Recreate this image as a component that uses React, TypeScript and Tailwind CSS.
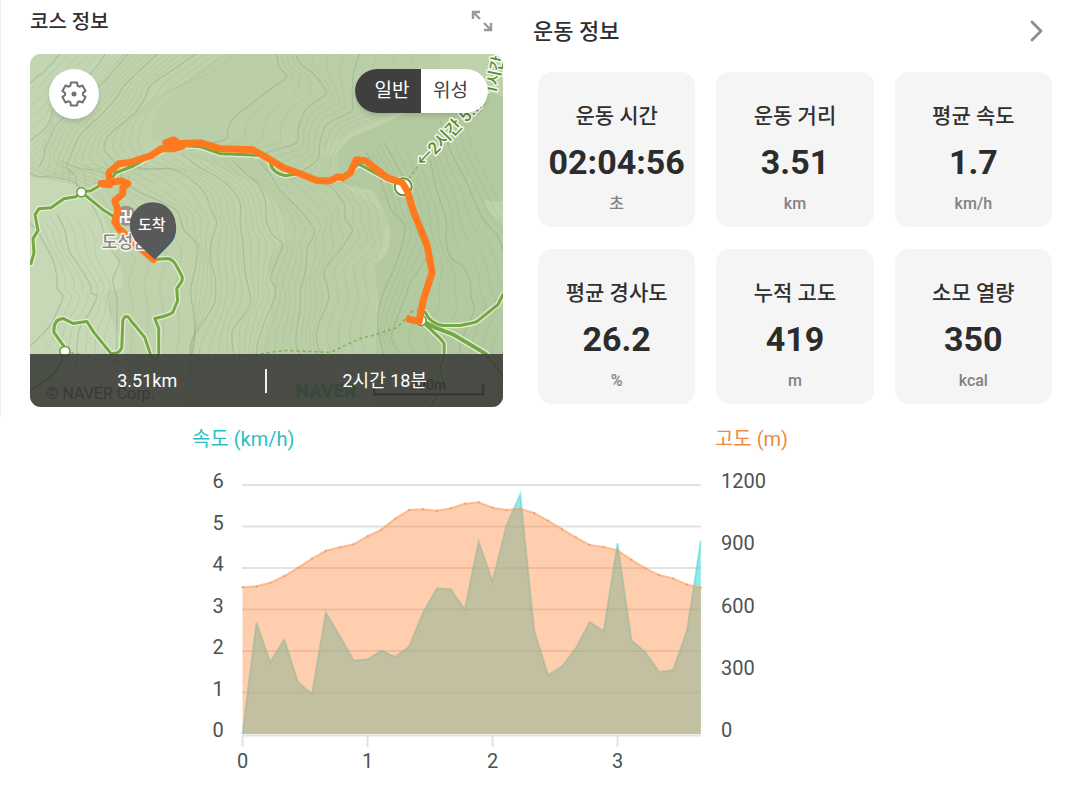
import React, { useState } from 'react';

type Point = [number, number];

interface Stat {
  label: string;
  value: string;
  unit: string;
}

const STATS: Stat[] = [
  { label: '운동 시간', value: '02:04:56', unit: '초' },
  { label: '운동 거리', value: '3.51', unit: 'km' },
  { label: '평균 속도', value: '1.7', unit: 'km/h' },
  { label: '평균 경사도', value: '26.2', unit: '%' },
  { label: '누적 고도', value: '419', unit: 'm' },
  { label: '소모 열량', value: '350', unit: 'kcal' },
];

// one sample every 1/9 km
const SPEED = [
  0, 2.69, 1.73, 2.28, 1.25, 0.96, 2.93, 2.37, 1.77, 1.8, 2.01, 1.86, 2.11, 2.93, 3.51, 3.49, 3.0,
  4.64, 3.68, 5.02, 5.78, 2.49, 1.42, 1.63, 2.07, 2.7, 2.48, 4.6, 2.26, 1.97, 1.5, 1.54, 2.49, 4.66,
];
const ALTITUDE = [
  707, 712, 729, 761, 801, 845, 883, 900, 914, 953, 985, 1038, 1080, 1083, 1076, 1088, 1110,
  1117, 1091, 1080, 1086, 1065, 1028, 987, 948, 911, 901, 885, 840, 799, 766, 750, 720, 705,
];

// Each family is a set of guide lines; contours are interpolated between neighbours.
const CONTOURS: { steps: number; lines: Point[][] }[] = [
  {
    steps: 5,
    lines: [
      [[29, 82], [36, 76], [44, 70], [52, 62], [56, 56], [60, 50]],
      [[29, 140], [44, 128], [52, 108], [72, 88], [92, 70], [106, 50]],
      [[38, 166], [44, 148], [54, 126], [78, 102], [104, 80], [130, 50]],
      [[76, 186], [66, 166], [78, 136], [102, 112], [124, 84], [160, 50]],
      [[124, 184], [104, 150], [108, 134], [134, 112], [150, 84], [200, 50]],
      [[150, 168], [146, 140], [156, 106], [180, 84], [224, 70], [250, 50]],
    ],
  },
  {
    steps: 4,
    lines: [
      [[190, 150], [226, 138], [234, 116], [262, 94], [286, 76], [276, 50]],
      [[250, 158], [296, 142], [306, 108], [326, 92], [312, 72], [294, 50]],
      [[290, 180], [318, 158], [326, 124], [352, 110], [352, 90], [360, 50]],
      [[340, 184], [336, 156], [356, 130], [400, 112], [428, 84], [432, 50]],
    ],
  },
  {
    steps: 5,
    lines: [
      [[29, 172], [50, 176], [74, 182], [100, 222], [118, 260], [112, 280], [116, 320], [122, 407]],
      [[60, 160], [96, 170], [140, 192], [176, 210], [196, 244], [190, 290], [194, 340], [186, 407]],
      [[134, 166], [170, 168], [204, 192], [216, 222], [210, 260], [214, 302], [190, 344], [198, 407]],
      [[180, 152], [216, 176], [240, 204], [242, 240], [250, 300], [232, 330], [236, 366], [230, 407]],
      [[232, 160], [258, 184], [266, 220], [282, 244], [270, 278], [274, 298], [256, 350], [262, 407]],
      [[258, 160], [280, 190], [314, 230], [306, 260], [300, 290], [296, 330], [302, 360], [298, 407]],
      [[280, 172], [330, 186], [344, 204], [352, 230], [324, 270], [328, 300], [316, 340], [330, 407]],
      [[350, 176], [372, 190], [386, 214], [390, 250], [374, 264], [378, 300], [372, 340], [390, 407]],
    ],
  },
  {
    steps: 4,
    lines: [
      [[29, 222], [44, 244], [56, 276], [62, 296], [50, 324], [29, 346]],
      [[56, 214], [68, 250], [90, 286], [96, 296], [78, 330], [70, 407]],
      [[96, 224], [104, 256], [116, 284], [114, 306], [112, 340], [120, 407]],
    ],
  },
  {
    steps: 4,
    lines: [
      [[366, 152], [384, 190], [404, 224], [400, 250], [384, 290], [378, 330], [392, 407]],
      [[384, 142], [410, 190], [428, 250], [410, 282], [404, 300], [392, 340], [428, 407]],
      [[430, 160], [446, 220], [450, 256], [470, 280], [474, 310], [460, 350], [490, 407]],
      [[440, 120], [466, 180], [484, 220], [503, 250], [520, 300], [503, 350], [510, 407]],
      [[474, 120], [490, 170], [512, 210], [530, 240], [540, 300], [540, 350], [540, 407]],
    ],
  },
];

const wobble = (i: number, j: number) => Math.sin(i * 2.1 + j * 3.7) * 3;

const smooth = (pts: Point[]) => {
  let d = `M${pts[0][0]} ${pts[0][1]}`;
  for (let i = 0; i < pts.length - 1; i++) {
    const p0 = pts[i - 1] ?? pts[i];
    const p1 = pts[i];
    const p2 = pts[i + 1];
    const p3 = pts[i + 2] ?? p2;
    const c1 = [p1[0] + (p2[0] - p0[0]) / 7, p1[1] + (p2[1] - p0[1]) / 7];
    const c2 = [p2[0] - (p3[0] - p1[0]) / 7, p2[1] - (p3[1] - p1[1]) / 7];
    d += `C${[...c1, ...c2, ...p2].map((n) => n.toFixed(1)).join(' ')}`;
  }
  return d;
};

// adds jittered midpoints so the lines look surveyed instead of drawn with a spline
const roughen = (pts: Point[], seed: number): Point[] =>
  pts.flatMap((p, i) => {
    const next = pts[i + 1];
    if (!next) return [p];
    const w = wobble(i, seed * 0.12);
    return [p, [(p[0] + next[0]) / 2 + w, (p[1] + next[1]) / 2 - w * 0.6]] as Point[];
  });

const contourPaths = CONTOURS.flatMap(({ steps, lines }, f) =>
  lines.slice(0, -1).flatMap((line, k) =>
    Array.from({ length: steps }, (_, s) => {
      const t = s / steps;
      const pts = line.map(([x, y], i): Point => {
        const [nx, ny] = lines[k + 1][i];
        return [x + (nx - x) * t, y + (ny - y) * t];
      });
      return { d: smooth(roughen(pts, f * 5 + k + t)), major: s === 0 };
    }),
  ),
);

const ROADS = [
  'M30 263L33 252L32 238L37 230L34 214L38 208L50 207L63 198L75 196L80 191L90 190L97 186L104 182',
  'M80 191L102 209L110 214L122 222',
  'M154 259L167 258Q172 259 175 264L181 275Q183 280 179 284L176 288L177 300L172 312Q168 315 154 318L158 328V353Q157 360 154 360Q151 360 149 352L144 337L135 326Q131 322 128 317Q124 314 122 320L121 347Q119 354 110 353L93 332L86 321L72 323L62 318Q52 319 53 332L63 346V351L60 362L52 375L30 390',
  'M108 182L115 172L133 165L147 157L162 150L172 143L183 145L200 146L220 153L247 154L263 155L270 162Q271 172 285 175L297 173L317 181L345 177L358 163L387 179L402 184',
  'M421 310L425 312Q431 324 443 325H460Q473 323 477 321L498 304L503 294',
  'M421 320L440 338L444 343V355L440 370L444 383L430 407',
];
const MAIN_ROAD = 'M421 320L437 328L453 334L485 353L503 375';

const ROUTE =
  'M153 259L133 242L118 228L114 221L117 210L114 200L122 193V187L127 183L120 180L100 183L109 184L108 172L118 163L128 162L150 155L160 148L172 148L182 145L173 139L165 142L172 145L177 143L200 142L220 148L252 149L263 155L283 167L297 172L317 180L330 180L337 176L343 177L350 172L356 159L365 160L387 177L402 182L407 190L413 210L427 245L432 272L423 300L419 321L409 319';

const TrailMap = () => (
  <svg
    viewBox="29 53 474 354"
    preserveAspectRatio="xMidYMid slice"
    className="absolute inset-0 h-full w-full"
    aria-hidden="true"
  >
    <rect x="29" y="53" width="474" height="354" fill="#bfd2ac" />
    <path d="M29 53H122Q100 80 78 102T54 126T38 166L29 150Z" fill="#c3d6b3" />
    <path d="M29 176L76 184Q96 200 102 214T118 260T112 290T116 330T122 407H29Z" fill="#c6d8b5" />
    <path d="M224 53H440Q440 84 428 94T356 130T336 156L340 184L300 176L250 153L180 142L150 140Q148 110 180 84T224 53Z" fill="#bacfa8" />
    <path d="M180 150L262 160L300 178L340 184L390 214L376 264V407H262Q250 360 264 330T270 278T282 244T258 184Z" fill="#bacfa8" />
    <path d="M336 156Q340 140 366 130T428 100T503 96V407H372L378 300L374 264Q390 256 390 236T372 190L340 182Z" fill="#b3c99f" />
    <path d="M484 200Q490 215 503 224V200Z" fill="#bcd2aa" />

    <g fill="none" stroke="#93ac80">
      {contourPaths.map(({ d, major }, i) => (
        <path key={i} d={d} strokeWidth={major ? 1.2 : 0.9} opacity={major ? 0.5 : 0.26} />
      ))}
    </g>

    <g fill="none" strokeLinecap="round" strokeLinejoin="round">
      <path d={ROADS.join('')} stroke="#e3edd8" strokeWidth="5.5" />
      <path d={MAIN_ROAD} stroke="#e3edd8" strokeWidth="6.5" />
      <path d={ROADS.join('')} stroke="#74a840" strokeWidth="3" />
      <path d={MAIN_ROAD} stroke="#74a840" strokeWidth="4" />
    </g>
    <path
      d="M64 351L110 361L154 363L233 358L258 354L283 350L330 352L360 338L373 335L397 327L412 311L422 309M405 183L420 162M474 114L490 88M494 72L500 53"
      fill="none"
      stroke="#7fae55"
      strokeWidth="1.5"
      strokeDasharray="3 3"
    />
    <circle cx="80.5" cy="191.5" r="4.5" fill="#fff" stroke="#6d9c3c" strokeWidth="1.5" />
    <circle cx="64" cy="351" r="5" fill="#fff" stroke="#6d9c3c" strokeWidth="1.5" />
    <circle cx="421" cy="320" r="5" fill="#fff" stroke="#6d9c3c" strokeWidth="1.5" />
    <circle cx="403" cy="186" r="10.5" fill="#e3edd8" />
    <circle cx="403" cy="186" r="8.5" fill="#fff" stroke="#5f9a36" strokeWidth="2" />

    <g
      fill="#568f31"
      stroke="#f4f8ee"
      strokeWidth="3"
      strokeLinejoin="round"
      paintOrder="stroke"
      fontWeight="500"
    >
      <text transform="translate(423 167) rotate(-46)" fontSize="17">←2시간 5...</text>
      <text transform="translate(496 94) rotate(-78)" fontSize="16">1시간</text>
    </g>

    <circle cx="125" cy="215" r="10" fill="#9b9188" />
    <text x="125" y="221" fontSize="15" fontWeight="700" textAnchor="middle" fill="#fff">卍</text>
    <path d={ROUTE} fill="none" stroke="#ff7a1f" strokeWidth="7" strokeLinejoin="round" strokeLinecap="round" />
    <text
      x="101"
      y="247"
      fontSize="17"
      fontWeight="500"
      fill="#8f857d"
      stroke="#f4f6ee"
      strokeWidth="3"
      strokeLinejoin="round"
      paintOrder="stroke"
    >
      도성암
    </text>
    <path d="M149 255L153 258" stroke="#ff7a1f" strokeWidth="6" strokeLinecap="round" />

    <path d="M154 259L138 244A22 22 0 1 1 169 244Z" fill="#445c77" />
    <path d="M153 257L135 240A23 23 0 1 1 169 240Z" fill="#595959" />
    <text x="151" y="229" fontSize="15" fontWeight="500" textAnchor="middle" fill="#fff">도착</text>

    <text x="45" y="399" fontSize="16" fill="#111">© NAVER Corp.</text>
    <text x="295" y="397" fontSize="19" fontWeight="900" fill="#00b050">NAVER</text>
    <text x="428" y="390" fontSize="14" fontWeight="500" textAnchor="middle" fill="#000">300m</text>
    <path d="M374 384V394H483V384" fill="none" stroke="#000" strokeWidth="2.5" />
  </svg>
);

const gearPoints = Array.from({ length: 6 }, (_, k) =>
  [[-24, 9], [-15, 12], [15, 12], [24, 9]].map(([a, r]) => {
    const rad = ((k * 60 - 90 + a) * Math.PI) / 180;
    return `${(13 + r * Math.cos(rad)).toFixed(2)},${(13 + r * Math.sin(rad)).toFixed(2)}`;
  }).join(' '),
).join(' ');

const GearIcon = () => (
  <svg viewBox="0 0 26 26" className="size-[26px]" aria-hidden="true">
    <polygon points={gearPoints} fill="none" stroke="#707070" strokeWidth="2" strokeLinejoin="round" />
    <circle cx="13" cy="13" r="2.5" fill="#707070" />
  </svg>
);

const CourseCard = () => {
  const [mapType, setMapType] = useState<'normal' | 'satellite'>('normal');

  return (
    <section className="border-l border-[#ececec] pb-[10px] pl-[29px] pr-[30px]">
      <div className="flex h-[54px] items-start justify-between pr-[10px] pt-[7px]">
        <h2 className="text-[20px] leading-[30px] font-medium text-[#303030]">코스 정보</h2>
        <button type="button" aria-label="크게 보기" className="pt-[3px]">
          <svg viewBox="0 0 22 22" className="size-[22px]" fill="none" stroke="#999" strokeWidth="2.4" aria-hidden="true">
            <path d="M2 9V2H9M2 2L9 9M20 13V20H13M20 20L13 13" />
          </svg>
        </button>
      </div>

      <div className="relative flex aspect-[474/354] flex-col justify-between overflow-hidden rounded-[11px]">
        <TrailMap />
        <div className="relative flex items-start justify-between px-[15px] pt-[15px]">
          <button
            type="button"
            aria-label="지도 설정"
            className="ml-1 flex size-[50px] items-center justify-center rounded-full bg-white shadow-md"
          >
            <GearIcon />
          </button>
          <div className="flex h-11 overflow-hidden rounded-full bg-white text-[19px] shadow-md">
            <button
              type="button"
              onClick={() => setMapType('normal')}
              className={`w-[66px] pl-2 ${mapType === 'normal' ? 'bg-[#3f3f3f] text-white' : 'text-[#3f3f3f]'}`}
            >
              일반
            </button>
            <button
              type="button"
              onClick={() => setMapType('satellite')}
              className={`w-[67px] pr-2 ${mapType === 'satellite' ? 'bg-[#3f3f3f] text-white' : 'text-[#3f3f3f]'}`}
            >
              위성
            </button>
          </div>
        </div>
        <div className="relative grid h-[53px] grid-cols-2 items-center divide-x-2 divide-white/90 bg-[#3d3e3b]/90 text-center text-[18px] leading-6 text-white">
          <span>3.51km</span>
          <span>2시간 18분</span>
        </div>
      </div>
    </section>
  );
};

const StatCard = ({ label, value, unit }: Stat) => (
  <div className="flex flex-col items-center gap-[6px] rounded-[14px] bg-[#f5f5f5] pb-[11px] pt-7">
    <dt className="text-[21px] leading-8 font-medium text-[#303030]">{label}</dt>
    <dd className="text-[34px] leading-[48px] font-bold text-[#2c2c2c]">{value}</dd>
    <dd className="text-[16px] leading-6 font-medium text-[#828282]">{unit}</dd>
  </div>
);

const WorkoutSection = () => (
  <section className="pr-[23px]">
    <div className="flex h-[72px] items-start justify-between pr-[9px] pt-4">
      <h2 className="text-[22px] leading-8 font-medium text-[#303030]">운동 정보</h2>
      <button type="button" aria-label="더 보기" className="pt-1">
        <svg viewBox="0 0 14 22" className="h-[22px] w-[14px]" fill="none" stroke="#8c8c8c" strokeWidth="2.8" aria-hidden="true">
          <path d="M3 2L12 11L3 20" strokeLinecap="round" strokeLinejoin="round" />
        </svg>
      </button>
    </div>
    <dl className="grid grid-cols-3 gap-x-[21px] gap-y-[22px] pl-[5px]">
      {STATS.map((stat) => (
        <StatCard key={stat.label} {...stat} />
      ))}
    </dl>
  </section>
);

const LEFT = 50;
const BASE = 275;
const STEP = 125 / 9;
const UNIT = 41.5;

const chartPoints = (values: number[], perUnit: number) =>
  values.map((v, i): Point => [LEFT + 0.5 + i * STEP, BASE - (v / perUnit) * UNIT]);

const speedPts = chartPoints(SPEED, 1);
const altitudePts = chartPoints(ALTITUDE, 200);
const RIGHT = speedPts[speedPts.length - 1][0];

const toArea = (pts: Point[]) => `M${pts.join('L')}V${BASE}H${pts[0][0]}Z`;

const ProfileChart = () => (
  <section className="grid grid-cols-[192fr_596fr_287fr] pt-[7px]">
    <figure className="col-start-2">
      <figcaption className="flex justify-between text-[20px] leading-[30px]">
        <span className="text-[#2bbfc3]">속도 (km/h)</span>
        <span className="text-[#f08a3c]">고도 (m)</span>
      </figcaption>
      <svg viewBox="0 -5 596 330" className="w-full" role="img" aria-label="속도와 고도 그래프">
        <g stroke="#e2e2e2" strokeWidth="2">
          {[0, 1, 2, 3, 4, 5, 6].map((n) => (
            <path key={n} d={`M${LEFT} ${BASE - n * UNIT + (n === 0 ? 1.5 : 0)}H${RIGHT}`} />
          ))}
          {[0, 1, 2, 3].map((n) => (
            <path key={n} d={`M${LEFT + 0.5 + n * 125} ${BASE + 2}V${BASE + 13}`} />
          ))}
        </g>
        <path d={toArea(speedPts)} fill="#2ecfd0" fillOpacity="0.5" />
        <path d={`M${speedPts.join('L')}`} fill="none" stroke="#2ecfd0" strokeOpacity="0.4" strokeWidth="2" />
        <path d={toArea(altitudePts)} fill="#ff8a3d" fillOpacity="0.42" />
        <path d={`M${altitudePts.join('L')}`} fill="none" stroke="#f79a5c" strokeOpacity="0.55" strokeWidth="2" />
        {altitudePts.map(([x, y]) => (
          <circle key={x} cx={x} cy={y} r="1" fill="#f3995f" />
        ))}
        <g fill="#4b5254" fontSize="20">
          {[0, 1, 2, 3, 4, 5, 6].map((n) => (
            <text key={n} x="26" y={BASE + 3 - n * UNIT} textAnchor="middle">{n}</text>
          ))}
          {[0, 300, 600, 900, 1200].map((n) => (
            <text key={n} x="529" y={BASE + 3 - (n / 200) * UNIT}>{n}</text>
          ))}
          {[0, 1, 2, 3].map((n) => (
            <text key={n} x={LEFT + 0.5 + n * 125} y={BASE + 34} textAnchor="middle">{n}</text>
          ))}
        </g>
      </svg>
    </figure>
  </section>
);

const App: React.FC = () => (
  <main className="min-h-screen bg-white font-[Roboto,'Noto_Sans_CJK_KR',sans-serif]">
    <div className="grid grid-cols-[533fr_542fr]">
      <CourseCard />
      <WorkoutSection />
    </div>
    <ProfileChart />
  </main>
);

export default App;
